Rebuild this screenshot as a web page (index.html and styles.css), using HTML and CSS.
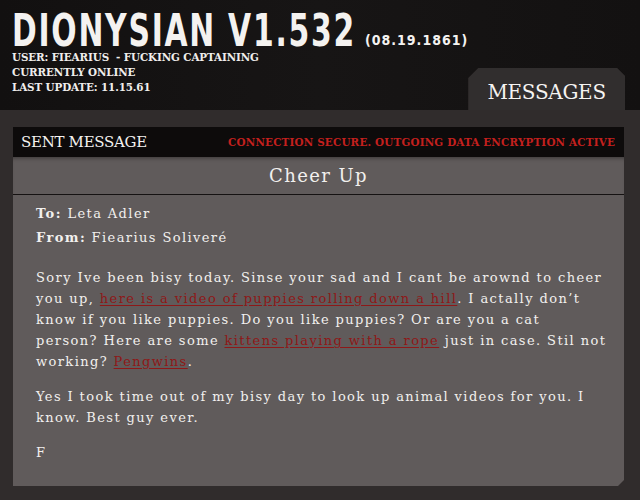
FILE: index.html
```html
<!DOCTYPE html>
<html>
<head>
<meta charset="utf-8">
<link rel="stylesheet" href="styles.css">
</head>
<body>
<header class="top">
  <div class="brand">
    <h1 class="title"><span class="title-main">DIONYSIAN V1.532</span><span class="title-date">(08.19.1861)</span></h1>
    <div class="meta">
      <div>USER: FIEARIUS &nbsp;- FUCKING CAPTAINING</div>
      <div>CURRENTLY ONLINE</div>
      <div>LAST UPDATE: 11.15.61</div>
    </div>
  </div>
  <div class="tab">MESSAGES</div>
</header>
<main class="main">
  <section class="panel">
    <div class="panel-head">
      <span class="panel-label">SENT MESSAGE</span>
      <span class="panel-status">CONNECTION SECURE. OUTGOING DATA ENCRYPTION ACTIVE</span>
    </div>
    <div class="subject">Cheer Up</div>
    <div class="body">
      <p class="field"><b>To:</b> Leta Adler</p>
      <p class="field"><b>From:</b> Fiearius Soliveré</p>
      <p class="para first">Sory Ive been bisy today. Sinse your sad and I cant be arownd to cheer<br>you up, <a href="#">here is a video of puppies rolling down a hill</a>. I actally don’t<br>know if you like puppies. Do you like puppies? Or are you a cat<br>person? Here are some <a href="#">kittens playing with a rope</a> just in case. Stil not<br>working? <a href="#">Pengwins</a>.</p>
      <p class="para">Yes I took time out of my bisy day to look up animal videos for you. I<br>know. Best guy ever.</p>
      <p class="para">F</p>
    </div>
  </section>
</main>
</body>
</html>
```
FILE: styles.css
```css
html, body {
  margin: 0;
  padding: 0;
}
body {
  width: 640px;
  height: 500px;
  background: #302c2c;
  overflow: hidden;
  font-family: "DejaVu Serif", serif;
}
.top {
  height: 110px;
  background: linear-gradient(90deg, #121010 0%, #171515 50%, #131111 100%);
  display: flex;
  justify-content: space-between;
  align-items: flex-end;
  padding: 0 15px 0 12px;
  box-sizing: border-box;
}
.brand {
  align-self: flex-start;
  padding-top: 6px;
}
.title {
  margin: 0;
  display: flex;
  align-items: flex-end;
  height: 44px;
  color: #f4f2f0;
  font-weight: bold;
}
.title-main {
  font-family: "DejaVu Sans Condensed", "DejaVu Sans", sans-serif;
  font-size: 38px;
  line-height: 44px;
  letter-spacing: 2px;
  display: inline-block;
  transform: scale(0.872, 1.15);
  transform-origin: left top;
  width: 353px;
  white-space: nowrap;
}
.title-date {
  font-family: "DejaVu Sans Condensed", "DejaVu Sans", sans-serif;
  font-size: 14px;
  line-height: 14px;
  letter-spacing: 1px;
  margin-bottom: 3px;
}
.meta {
  color: #f0eeec;
  font-family: "DejaVu Serif Condensed", "DejaVu Serif", serif;
  font-weight: bold;
  font-size: 11.5px;
  line-height: 15px;
  letter-spacing: -0.1px;
}
.tab {
  width: 159px;
  height: 42px;
  background: #312e2e;
  color: #f6f4f2;
  font-size: 20px;
  line-height: 48px;
  text-align: center;
  clip-path: polygon(10px 0, 149px 0, 159px 10px, 159px 100%, 0 100%, 0 10px);
  letter-spacing: -0.3px;
}
.main {
  padding: 17px 16px 14px 13px;
}
.panel {
  background: #605b5b;
  height: 359px;
  clip-path: polygon(0 0, 100% 0, 100% calc(100% - 6px), calc(100% - 6px) 100%, 0 100%);
}
.panel-head {
  height: 30px;
  background: #0d0b0b;
  display: flex;
  justify-content: space-between;
  align-items: center;
  padding: 0 9px 0 8px;
}
.panel-label {
  color: #f4f2f0;
  font-size: 15px;
  letter-spacing: -0.3px;
}
.panel-status {
  color: #c4201e;
  font-family: "DejaVu Serif Condensed", "DejaVu Serif", serif;
  font-weight: bold;
  font-size: 11.5px;
  letter-spacing: 0.2px;
}
.subject {
  height: 37px;
  border-bottom: 1px solid #151212;
  color: #f2f0ee;
  text-align: center;
  font-size: 18px;
  letter-spacing: 1.4px;
  line-height: 37px;
  box-shadow: inset 0 4px 4px -3px rgba(0,0,0,0.4);
}
.body {
  padding: 8px 8px 0 23px;
  color: #f2f0ee;
  font-size: 13px;
  letter-spacing: 1.4px;
  line-height: 21px;
}
.body p {
  margin: 0;
}
.field {
  margin-bottom: 3px !important;
}
.para {
  margin-top: 14px !important;
}
.para.first {
  margin-top: 19px !important;
}
.body a {
  color: #8e1818;
  text-decoration: underline;
  text-underline-offset: 2px;
}
```
